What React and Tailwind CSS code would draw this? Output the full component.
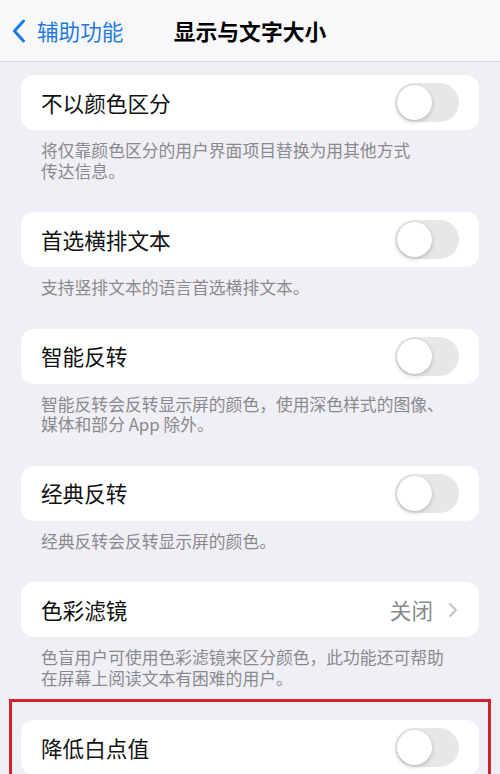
const sections = [
  { label: "不以颜色区分", note: ["将仅靠颜色区分的用户界面项目替换为用其他方式", "传达信息。"] },
  { label: "首选横排文本", note: ["支持竖排文本的语言首选横排文本。"] },
  { label: "智能反转", note: ["智能反转会反转显示屏的颜色，使用深色样式的图像、", "媒体和部分 App 除外。"] },
  { label: "经典反转", note: ["经典反转会反转显示屏的颜色。"] },
  { label: "色彩滤镜", value: "关闭", note: ["色盲用户可使用色彩滤镜来区分颜色，此功能还可帮助", "在屏幕上阅读文本有困难的用户。"] },
];

const Toggle = () => (
  <div className="w-[64px] h-[39px] rounded-full bg-[#e7e7ea] p-[2px] flex items-center">
    <div className="w-[35px] h-[35px] rounded-full bg-white shadow-[0_2px_5px_rgba(0,0,0,0.18),0_0_1px_rgba(0,0,0,0.15)]" />
  </div>
);

const Row = ({ label, value }) => (
  <div className="mx-[21px] h-[55px] rounded-[13px] bg-white flex items-center justify-between px-[20px]">
    <span className="text-[21.6px] leading-[26px] text-[#111]">{label}</span>
    {value ? (
      <div className="flex items-center gap-[15px] pr-[1px]">
        <span className="text-[21.6px] leading-[26px] text-[#8a8a8e]">{value}</span>
        <svg width="10" height="16" viewBox="0 0 10 16">
          <path d="M2 2l6 6-6 6" fill="none" stroke="#c3c3c8" strokeWidth="2" strokeLinecap="round" strokeLinejoin="round" />
        </svg>
      </div>
    ) : (
      <Toggle />
    )}
  </div>
);

const App = () => {
  return (
    <div
      className="w-[500px] h-[774px] overflow-hidden bg-[#f0eff5]"
      style={{ fontFamily: '"Noto Sans CJK SC", "Noto Sans", sans-serif' }}
    >
      <header className="h-[62px] bg-[#f8f8fa] border-b border-[#d9d9dd] flex items-center relative">
        <div className="flex items-center pl-[12px] gap-[11px] text-[#1f7ae0]">
          <svg width="14" height="24" viewBox="0 0 14 24">
            <path d="M11.5 2L2.5 12l9 10" fill="none" stroke="#1f7ae0" strokeWidth="3" strokeLinecap="round" strokeLinejoin="round" />
          </svg>
          <span className="text-[21.6px] leading-[26px]">辅助功能</span>
        </div>
        <h1 className="absolute left-0 right-0 text-center text-[21.8px] leading-[26px] font-semibold text-black pointer-events-none">
          显示与文字大小
        </h1>
      </header>

      <div className="pt-[13px]">
        {sections.map((s) => (
          <section key={s.label}>
            <Row label={s.label} value={s.value} />
            <div className="pl-[41px] pr-[16px] pt-[10px] pb-[31px] text-[16.8px] leading-[20.5px] text-[#8a8a8e]">
              {s.note.map((line) => (
                <div key={line}>{line}</div>
              ))}
            </div>
          </section>
        ))}
      </div>

      {/* highlighted row */}
      <div className="-mt-[20px] mx-[9px] border-[3px] border-b-0 border-[#d3202f] pt-[18px] h-[80px]">
        <div className="mx-[9px] h-[55px] rounded-[13px] bg-white flex items-center justify-between px-[20px]">
          <span className="text-[21.6px] leading-[26px] text-[#111]">降低白点值</span>
          <Toggle />
        </div>
      </div>
    </div>
  );
};

export default App;
